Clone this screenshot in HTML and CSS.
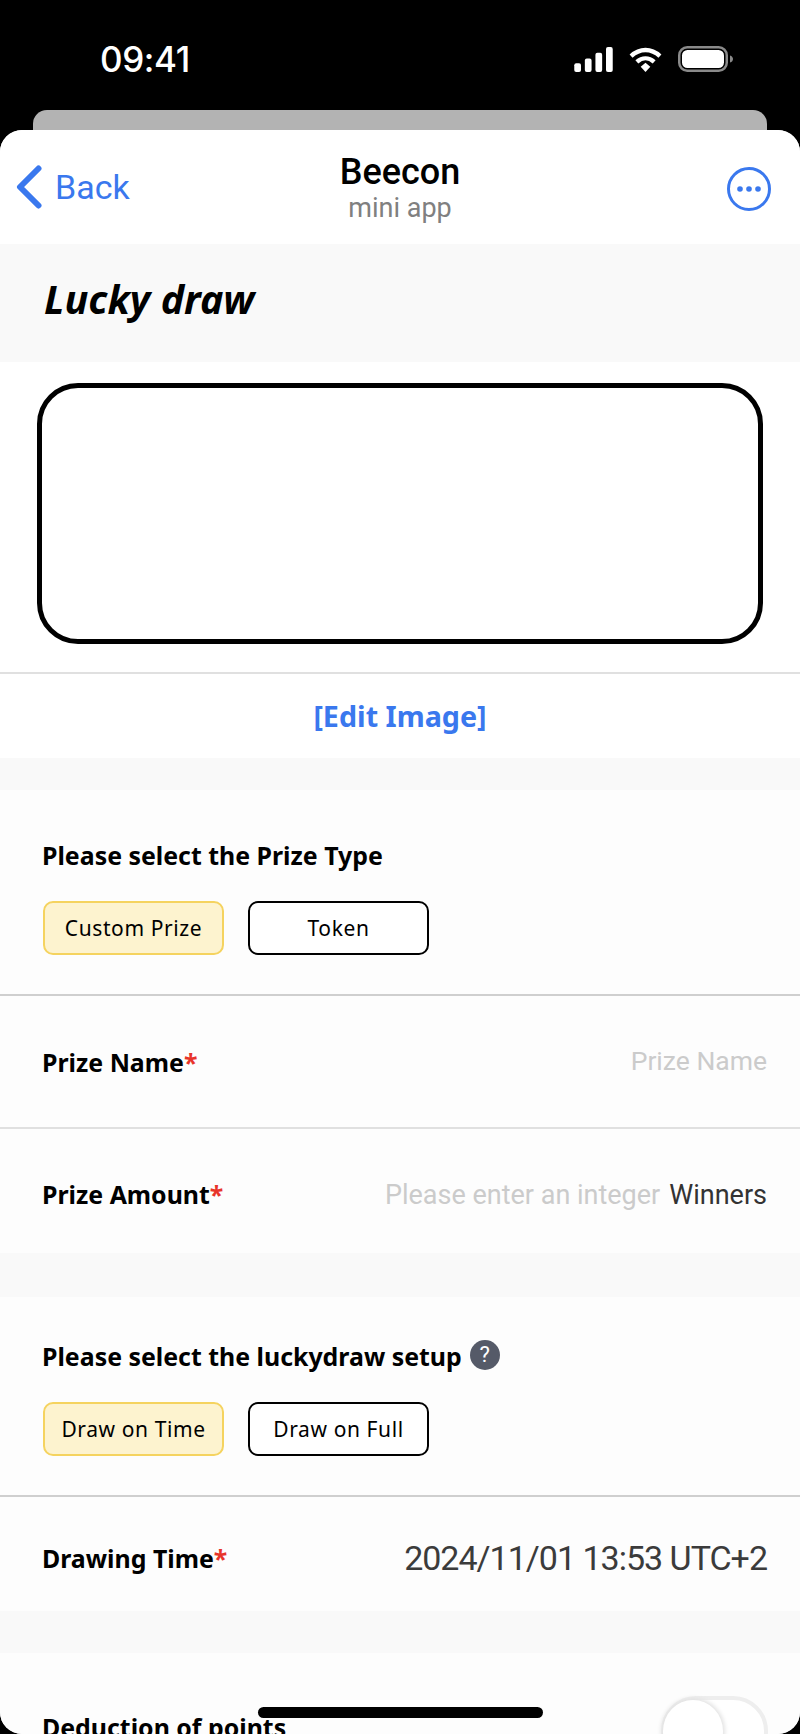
FILE: index.html
```html
<!DOCTYPE html>
<html lang="en">
<head>
<meta charset="utf-8">
<title>Beecon Lucky draw</title>
<link rel="stylesheet" href="styles.css">
</head>
<body>
<div class="phone">
  <header class="status">
    <span class="clock">09:41</span>
    <div class="status-icons">
      <svg class="ic-signal" width="39" height="25" viewBox="0 0 40 26"><rect x="0" y="17" width="7" height="9" rx="2"/><rect x="11" y="12" width="7" height="14" rx="2"/><rect x="22" y="6" width="7" height="20" rx="2"/><rect x="33" y="0" width="7" height="26" rx="2"/></svg>
      <svg class="ic-wifi" width="33" height="25" viewBox="0 0 34 26"><path d="M2 9.500C11 1 23 1 32 9.500" fill="none" stroke="#fff" stroke-width="4.500"/><path d="M8 15.500C13.500 10.500 20.500 10.500 26 15.500" fill="none" stroke="#fff" stroke-width="4.500"/><path d="M12 20.500L17 16.500L22 20.500L17 26Z" fill="#fff"/></svg>
      <svg class="ic-batt" width="55" height="26" viewBox="0 0 55 26"><rect x="1.250" y="1.250" width="47.500" height="23.500" rx="8" fill="none" stroke="#8a8a8a" stroke-width="2.500"/><rect x="4" y="4" width="42" height="18" rx="5.500" fill="#fff"/><path d="M52 9.500c2 .5 3 2 3 3.500s-1 3-3 3.500z" fill="#8a8a8a"/></svg>
    </div>
  </header>
  <div class="peek"></div>
  <main class="sheet">
    <nav class="nav">
      <div class="back">
        <svg width="26" height="44" viewBox="0 0 26 44"><path d="M22.500 3.500L4 22L22.500 40.500" fill="none" stroke="#3a78ee" stroke-width="6" stroke-linecap="round" stroke-linejoin="round"/></svg>
        <span>Back</span>
      </div>
      <div class="nav-title">
        <div class="nav-name">Beecon</div>
        <div class="nav-sub">mini app</div>
      </div>
      <svg class="more" width="44" height="44" viewBox="0 0 44 44"><circle cx="22" cy="22" r="20.500" fill="none" stroke="#3a78ee" stroke-width="3"/><circle cx="13" cy="22" r="2.800" fill="#3a78ee"/><circle cx="22" cy="22" r="2.800" fill="#3a78ee"/><circle cx="31" cy="22" r="2.800" fill="#3a78ee"/></svg>
    </nav>

    <h1 class="page-title">Lucky draw</h1>

    <section class="image-card">
      <div class="image-wrap"><div class="image-box"></div></div>
      <div class="edit">[Edit Image]</div>
    </section>

    <section class="group group-prize">
      <div class="picker">
        <div class="label">Please select the Prize Type</div>
        <div class="options">
          <div class="opt opt-on">Custom Prize</div>
          <div class="opt">Token</div>
        </div>
      </div>
      <div class="row row-name">
        <div class="label">Prize Name<span class="req">*</span></div>
        <div class="ph">Prize Name</div>
      </div>
      <div class="row row-amount">
        <div class="label">Prize Amount<span class="req">*</span></div>
        <div class="val"><span class="ph">Please enter an integer</span><span class="unit">Winners</span></div>
      </div>
    </section>

    <section class="group group-setup">
      <div class="picker picker-setup">
        <div class="label label-help">Please select the luckydraw setup
          <span class="help">?</span>
        </div>
        <div class="options">
          <div class="opt opt-on">Draw on Time</div>
          <div class="opt">Draw on Full</div>
        </div>
      </div>
      <div class="row row-time">
        <div class="label">Drawing Time<span class="req">*</span></div>
        <div class="time">2024/11/01 13:53 UTC+2</div>
      </div>
    </section>

    <section class="group group-deduct">
      <div class="label">Deduction of points</div>
      <div class="toggle"><div class="knob"></div></div>
    </section>
  </main>
  <div class="home"></div>
</div>
</body>
</html>
```

FILE: styles.css
```css
* { box-sizing: border-box; }
html, body { margin: 0; padding: 0; background: #000; }
.phone {
  position: relative;
  width: 800px;
  height: 1734px;
  overflow: hidden;
  background: #000;
  font-family: "Noto Sans", "Noto Sans CJK SC", sans-serif;
}
.status {
  height: 110px;
  display: flex;
  justify-content: space-between;
  align-items: flex-start;
  padding: 41px 67px 0 100px;
  color: #fff;
}
.clock {
  font-family: Inter, "Liberation Sans", sans-serif;
  font-size: 35px;
  line-height: 36px;
  font-weight: 500;
  letter-spacing: -0.4px;
}
.status-icons { display: flex; align-items: center; gap: 16px; padding-top: 5px; }
.ic-signal { fill: #fff; }
.peek {
  height: 20px;
  margin: 0 33px;
  background: #b3b3b3;
  border-radius: 14px 14px 0 0;
}
.sheet {
  height: 1604px;
  background: #f9f9f9;
  border-radius: 22px;
  overflow: hidden;
}
.nav {
  height: 114px;
  background: #fff;
  display: grid;
  grid-template-columns: 1fr auto 1fr;
  align-items: center;
  padding: 0 29px;
}
.back {
  display: flex;
  align-items: center;
  gap: 13px;
  margin-left: -13px;
  color: #3a78ee;
  font-family: Roboto, "Liberation Sans", sans-serif;
  font-size: 34px;
  line-height: 44px;
}
.nav-title { text-align: center; font-family: Roboto, "Liberation Sans", sans-serif; }
.nav-name { font-size: 36px; line-height: 41px; font-weight: 500; color: #000; }
.nav-sub { font-size: 27px; line-height: 30px; color: #808080; }
.more { justify-self: end; margin-top: 3px; }
.page-title {
  margin: 0;
  height: 118px;
  padding: 0 0 8px 44px;
  display: flex;
  align-items: center;
  font-size: 39.500px;
  font-weight: 700;
  font-style: italic;
  color: #000;
}
.image-card { background: #fff; }
.image-wrap { height: 312px; padding: 21px 37px 0; border-bottom: 2px solid #e0e0e0; }
.image-box {
  height: 261px;
  border: 5px solid #000;
  border-radius: 41px;
  background: #fff;
}
.edit {
  height: 84px;
  display: flex;
  align-items: center;
  justify-content: center;
  font-size: 28.700px;
  font-weight: 700;
  color: #3a78ee;
  padding-bottom: 2px;
}
.group { background: #fdfdfd; margin-top: 32px; }
.group-setup { margin-top: 44px; }
.group-deduct {
  margin-top: 42px;
  height: 90px;
  position: relative;
  padding: 56px 42px 0;
}
.label { font-size: 24.900px; line-height: 36px; font-weight: 700; color: #000; }
.req { color: #e8342a; }
.picker { height: 206px; padding: 47px 42px 0; border-bottom: 2px solid #cfcfcf; }
.picker-setup { height: 200px; padding-top: 41px; }
.label-help { display: flex; align-items: center; gap: 8px; }
.help {
  width: 30px;
  height: 30px;
  margin-top: -2px;
  border-radius: 50%;
  background: #555a68;
  color: #fff;
  font-family: Roboto, sans-serif;
  font-size: 22px;
  font-weight: 400;
  display: flex;
  align-items: center;
  justify-content: center;
}
.options { display: flex; gap: 24px; margin: 28px 0 0 1px; }
.opt {
  width: 181px;
  height: 54px;
  border: 2px solid #000;
  border-radius: 10px;
  background: #fff;
  display: flex;
  align-items: center;
  justify-content: center;
  font-size: 21px;
  letter-spacing: 0.600px;
  color: #000;
}
.opt-on { background: #fdf3cf; border-color: #f5d35f; }
.row {
  display: flex;
  align-items: center;
  justify-content: space-between;
  padding: 0 33px 0 42px;
}
.row-name { height: 133px; border-bottom: 2px solid #e0e0e0; }
.row-amount { height: 124px; padding-top: 6px; }
.row-time { height: 114px; padding-top: 7px; }
.ph { font-family: Roboto, sans-serif; font-size: 27px; color: #cbcbcb; }
.row-name .ph { font-size: 26.500px; margin-top: -2px; }
.val { display: flex; gap: 9px; align-items: center; margin-top: 2px; }
.unit { font-family: Roboto, sans-serif; font-size: 27px; color: #333; }
.time { font-family: Roboto, sans-serif; font-size: 34px; letter-spacing: -1px; color: #3b3b3b; }
.toggle {
  position: absolute;
  right: 32px;
  top: 43px;
  width: 107px;
  height: 70px;
  border: 4px solid #eeeeee;
  border-radius: 35px;
  background: #fff;
}
.knob {
  width: 60px;
  height: 62px;
  margin-left: -2px;
  border-radius: 50%;
  background: #fff;
  box-shadow: 0 0 4px 2px #e2e2e2;
}
.home {
  position: absolute;
  left: 258px;
  top: 1707px;
  width: 285px;
  height: 11px;
  border-radius: 6px;
  background: #000;
}
```
